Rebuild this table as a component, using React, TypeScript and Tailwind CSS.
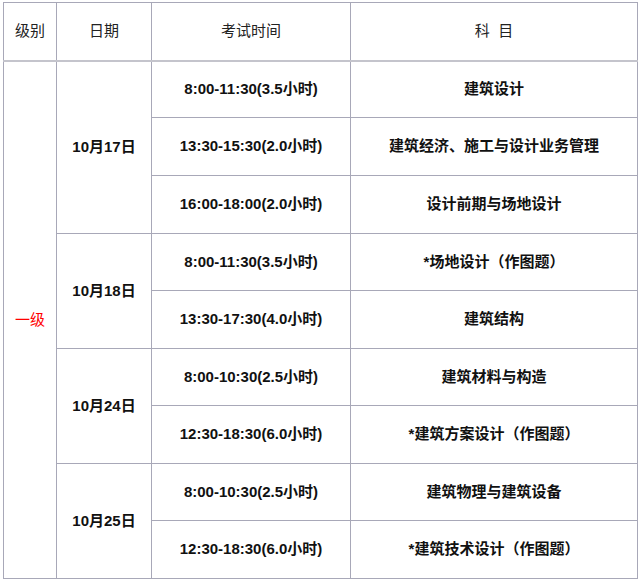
import React from "react";

const rows: { date: string; slots: { time: string; subject: string; h: number }[] }[] = [
  {
    date: "10月17日",
    slots: [
      { time: "8:00-11:30(3.5小时)", subject: "建筑设计", h: 57 },
      { time: "13:30-15:30(2.0小时)", subject: "建筑经济、施工与设计业务管理", h: 58 },
      { time: "16:00-18:00(2.0小时)", subject: "设计前期与场地设计", h: 58 },
    ],
  },
  {
    date: "10月18日",
    slots: [
      { time: "8:00-11:30(3.5小时)", subject: "*场地设计（作图题）", h: 57 },
      { time: "13:30-17:30(4.0小时)", subject: "建筑结构", h: 58 },
    ],
  },
  {
    date: "10月24日",
    slots: [
      { time: "8:00-10:30(2.5小时)", subject: "建筑材料与构造", h: 57 },
      { time: "12:30-18:30(6.0小时)", subject: "*建筑方案设计（作图题）", h: 58 },
    ],
  },
  {
    date: "10月25日",
    slots: [
      { time: "8:00-10:30(2.5小时)", subject: "建筑物理与建筑设备", h: 57 },
      { time: "12:30-18:30(6.0小时)", subject: "*建筑技术设计（作图题）", h: 58 },
    ],
  },
];

const font = { fontFamily: '"Liberation Sans", Arial, "Noto Sans CJK SC", sans-serif' };

export default function App() {
  const total = rows.reduce((a, r) => a + r.slots.length, 0);
  return (
    <div className="w-[640px] h-[581px] bg-white pl-[3px] pt-[2px] overflow-hidden" style={font}>
      <table className="border-collapse w-[634px] table-fixed text-[15px]">
        <colgroup>
          <col className="w-[53px]" />
          <col className="w-[95px]" />
          <col className="w-[199px]" />
          <col className="w-[287px]" />
        </colgroup>
        <thead>
          <tr className="h-[58px]">
            <th className="border border-[#a8a8b8] border-b-2 border-b-[#c4c4cc] font-normal text-[#222] text-center">级别</th>
            <th className="border border-[#a8a8b8] border-b-2 border-b-[#c4c4cc] font-normal text-[#222] text-center">日期</th>
            <th className="border border-[#a8a8b8] border-b-2 border-b-[#c4c4cc] font-normal text-[#222] text-center">考试时间</th>
            <th className="border border-[#a8a8b8] border-b-2 border-b-[#c4c4cc] font-normal text-[#222] text-center whitespace-pre">科  目</th>
          </tr>
        </thead>
        <tbody>
          {rows.map((r, ri) =>
            r.slots.map((s, si) => (
              <tr key={`${ri}-${si}`} style={{ height: s.h }}>
                {ri === 0 && si === 0 && (
                  <td rowSpan={total} className="border border-[#a8a8b8] text-center text-[#ff0000] font-normal">
                    一级
                  </td>
                )}
                {si === 0 && (
                  <td rowSpan={r.slots.length} className="border border-[#a8a8b8] text-center font-bold text-[#111]">
                    {r.date}
                  </td>
                )}
                <td className="border border-[#a8a8b8] text-center font-bold text-[#111]">{s.time}</td>
                <td className="border border-[#a8a8b8] text-center font-bold text-[#111]">{s.subject}</td>
              </tr>
            ))
          )}
        </tbody>
      </table>
    </div>
  );
}
